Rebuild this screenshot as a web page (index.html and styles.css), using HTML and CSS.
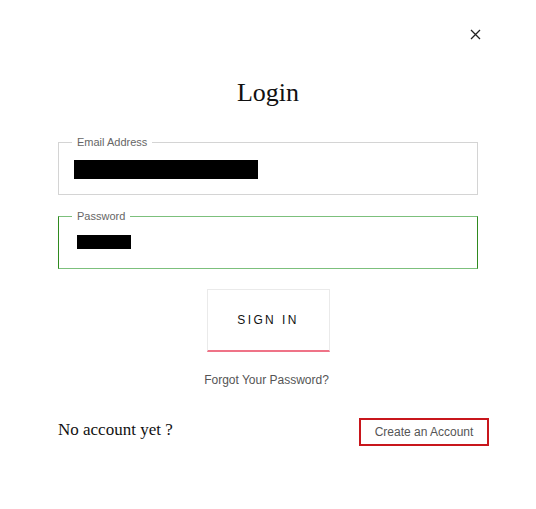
FILE: index.html
```html
<!DOCTYPE html>
<html lang="en">
<head>
<meta charset="UTF-8" />
<meta name="viewport" content="width=device-width, initial-scale=1" />
<title>Login</title>
<link rel="stylesheet" href="styles.css">
</head>
<body>

<div class="modal">
  <div class="top">
    <button class="close" aria-label="Close">
      <svg width="11" height="11" viewBox="0 0 11 11"><path d="M1 1L10 10M10 1L1 10" stroke="#222" stroke-width="1.3" fill="none"/></svg>
    </button>
  </div>

  <h2>Login</h2>

  <fieldset class="field">
    <legend>Email Address</legend>
    <span class="mask mask-email"></span>
  </fieldset>

  <fieldset class="field active">
    <legend>Password</legend>
    <span class="mask mask-pass"></span>
  </fieldset>

  <div class="actions">
    <button class="signin">SIGN IN</button>
    <a class="forgot" href="#">Forgot Your Password?</a>
  </div>

  <div class="bottom">
    <span class="noacc">No account yet ?</span>
    <button class="create">Create an Account</button>
  </div>
</div>

</body>
</html>
```

FILE: styles.css
```css
body {
  margin: 0;
  background: #fff;
  font-family: "Liberation Sans", Arial, sans-serif;
}
.modal {
  width: 420px;
  padding: 0 58px 0 58px;
}
.top {
  display: flex;
  justify-content: flex-end;
  padding-top: 29px;
  margin-right: -3px;
  height: 11px;
}
.close {
  border: none;
  background: none;
  padding: 0;
  width: 11px;
  height: 11px;
  display: flex;
  cursor: pointer;
}
h2 {
  font-family: "Liberation Serif", "Times New Roman", serif;
  font-weight: normal;
  font-size: 26px;
  text-align: center;
  color: #111;
  margin: 38px 0 0 0;
  line-height: 30px;
}
.field {
  margin: 29px 0 0 0;
  border: 1px solid #d4d4d4;
  padding: 13px 15px 23px 15px;
  height: 20px;
}
.field legend {
  font-size: 11px;
  color: #666;
  padding: 0 5px;
  margin-left: -2px;
  line-height: 10px;
}
.field + .field {
  margin-top: 16px;
}
.active {
  border-color: #7cc07c #2f8a1f #7cc07c #2f8a1f;
}
.mask {
  display: block;
  background: #000;
}
.mask-email {
  width: 184px;
  height: 19px;
}
.mask-pass {
  width: 54px;
  height: 14px;
  margin: 1px 0 0 3px;
}
.actions {
  display: flex;
  flex-direction: column;
  align-items: center;
  margin-top: 20px;
}
.signin {
  width: 123px;
  height: 63px;
  background: #fff;
  border: 1px solid #eaeaea;
  border-bottom: 2px solid #ef7387;
  font-family: "Liberation Sans", Arial, sans-serif;
  font-size: 12px;
  letter-spacing: 2.4px;
  color: #111;
  padding: 0;
  cursor: pointer;
}
.forgot {
  margin-top: 21px;
  margin-right: 3px;
  font-size: 12px;
  color: #555;
  text-decoration: none;
}
.bottom {
  display: flex;
  justify-content: space-between;
  align-items: center;
  margin-top: 31px;
  margin-right: -11px;
}
.noacc {
  font-family: "Liberation Serif", "Times New Roman", serif;
  font-size: 17px;
  color: #111;
  margin-top: -5px;
}
.create {
  width: 130px;
  height: 28px;
  background: #fff;
  border: 2px solid #c8161c;
  font-family: "Liberation Sans", Arial, sans-serif;
  font-size: 12px;
  color: #555;
  padding: 0;
  cursor: pointer;
}
```
